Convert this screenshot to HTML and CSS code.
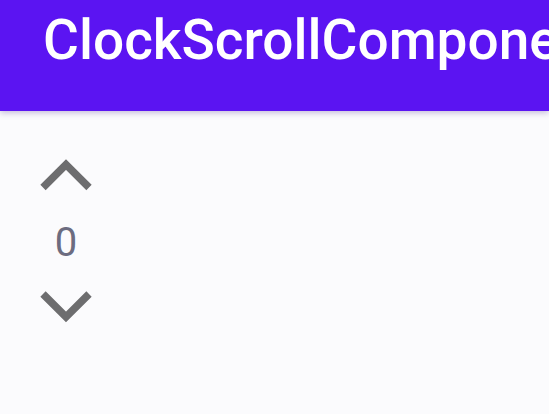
FILE: index.html
```html
<!DOCTYPE html>
<html lang="en">
<head>
    <meta charset="UTF-8">
    <meta name="viewport" content="width=device-width, initial-scale=1.0">
    <title>ClockScrollComponent</title>
    <link rel="stylesheet" href="styles.css">
</head>
<body>
    <header class="app-bar">
        <h1 class="app-title">ClockScrollComponent</h1>
    </header>

    <main class="content">
        <!-- Scroll picker: up arrow, value, down arrow -->
        <div class="picker">
            <button class="arrow" type="button" aria-label="Up">
                <svg width="56" height="36" viewBox="0 0 56 36">
                    <polyline points="5,30.5 28,7.5 51,30.5" />
                </svg>
            </button>
            <div class="value">0</div>
            <button class="arrow" type="button" aria-label="Down">
                <svg width="56" height="36" viewBox="0 0 56 36">
                    <polyline points="5,7 28,30 51,7" />
                </svg>
            </button>
        </div>
    </main>
</body>
</html>
```

FILE: styles.css
```css
body {
    margin: 0;
    font-family: Roboto, "Noto Sans", sans-serif;
    background-color: #fbfbfd;
    overflow: hidden;
}

.app-bar {
    height: 111px;
    box-sizing: border-box;
    padding: 8px 0 0 43px;
    background-color: #5b14f2;
    box-shadow: 0 2px 6px rgba(40, 0, 120, 0.25);
    white-space: nowrap;
    overflow: hidden;
}

.app-title {
    margin: 0;
    font-size: 55px;
    line-height: 64px;
    font-weight: 500;
    color: #fff;
}

.content {
    padding: 46px 0 0 38px;
}

.picker {
    display: flex;
    flex-direction: column;
    align-items: center;
    width: 56px;
}

.arrow {
    display: block;
    padding: 0;
    border: none;
    background: none;
    cursor: pointer;
}

.arrow svg {
    display: block;
}

.arrow polyline {
    fill: none;
    stroke: #6d6d6f;
    stroke-width: 7.5;
}

.value {
    margin: 26px 0 20px;
    font-size: 40px;
    line-height: 48px;
    color: #6c6c80;
}
```
